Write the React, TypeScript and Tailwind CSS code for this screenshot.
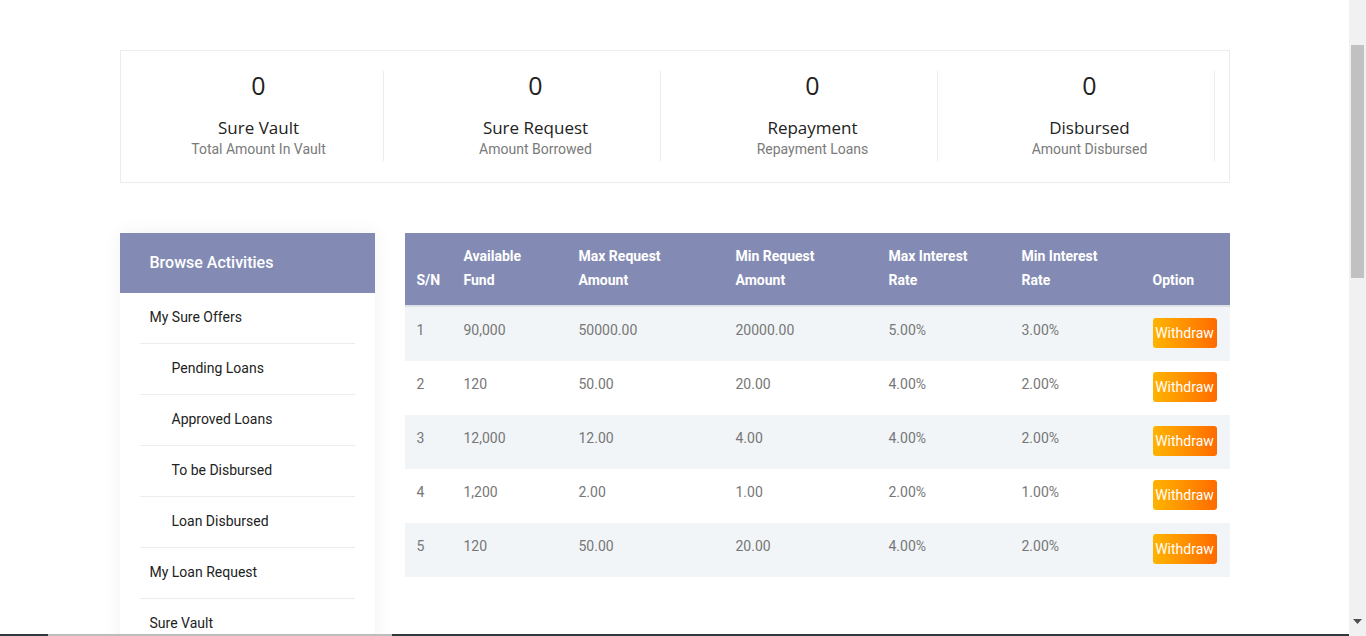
const stats = [
  { value: "0", title: "Sure Vault", sub: "Total Amount In Vault" },
  { value: "0", title: "Sure Request", sub: "Amount Borrowed" },
  { value: "0", title: "Repayment", sub: "Repayment Loans" },
  { value: "0", title: "Disbursed", sub: "Amount Disbursed" },
];

const menu = [
  { label: "My Sure Offers", sub: false },
  { label: "Pending Loans", sub: true },
  { label: "Approved Loans", sub: true },
  { label: "To be Disbursed", sub: true },
  { label: "Loan Disbursed", sub: true },
  { label: "My Loan Request", sub: false },
  { label: "Sure Vault", sub: false },
];

const rows = [
  ["1", "90,000", "50000.00", "20000.00", "5.00%", "3.00%"],
  ["2", "120", "50.00", "20.00", "4.00%", "2.00%"],
  ["3", "12,000", "12.00", "4.00", "4.00%", "2.00%"],
  ["4", "1,200", "2.00", "1.00", "2.00%", "1.00%"],
  ["5", "120", "50.00", "20.00", "4.00%", "2.00%"],
];

const heads = [
  { label: <>S/N</>, w: "w-[47px]" },
  { label: <>Available<br />Fund</>, w: "w-[115px]" },
  { label: <>Max Request<br />Amount</>, w: "w-[157px]" },
  { label: <>Min Request<br />Amount</>, w: "w-[153px]" },
  { label: <>Max Interest<br />Rate</>, w: "w-[133px]" },
  { label: <>Min Interest<br />Rate</>, w: "w-[131px]" },
  { label: <>Option</>, w: "w-[89px]" },
];

export default function App() {
  return (
    <div className="h-[636px] flex bg-white font-['Roboto',sans-serif] overflow-hidden">
      <div className="flex-1 flex flex-col min-w-0">
        <main className="flex-1 overflow-hidden">
          <div className="w-[1110px] mx-auto pt-[50px]">
            {/* Stats */}
            <section className="border border-[#ececec] pl-[14px] pt-5 pb-[21px] flex gap-[28px]">
              {stats.map((s) => (
                <div key={s.title} className="w-[249px] h-[90px] border-r border-[#ececec] flex flex-col items-center">
                  <p className="font-['Open_Sans',sans-serif] text-[25px] leading-[28px] text-[#222]">{s.value}</p>
                  <p className="font-['Open_Sans',sans-serif] text-[17px] leading-[22px] text-[#222] mt-[18px]">{s.title}</p>
                  <p className="text-[14px] leading-[20px] text-[#7a7a7a]">{s.sub}</p>
                </div>
              ))}
            </section>

            <div className="flex gap-[30px] mt-[50px] items-start">
              {/* Sidebar */}
              <aside className="w-[255px] shrink-0 bg-white shadow-[0_0_18px_rgba(0,0,0,0.06)]">
                <div className="h-[60px] bg-[#838bb4] flex items-center pl-[30px]">
                  <h2 className="text-white text-[16px] font-medium">Browse Activities</h2>
                </div>
                <ul className="px-5">
                  {menu.map((m) => (
                    <li
                      key={m.label}
                      className={`h-[51px] pb-[2px] flex items-center border-b border-[#ececec] text-[14px] text-[#222] ${m.sub ? "pl-[32px]" : "pl-[10px]"}`}
                    >
                      {m.label}
                    </li>
                  ))}
                </ul>
              </aside>

              {/* Table */}
              <table className="w-[825px] border-collapse table-fixed">
                <thead>
                  <tr className="bg-[#838bb4]">
                    {heads.map((h, i) => (
                      <th
                        key={i}
                        className={`${h.w} text-left align-bottom px-3 pt-[11px] pb-[13px] text-[14px] leading-[24px] font-bold text-white border-b-2 border-[#dee2e6]`}
                      >
                        {h.label}
                      </th>
                    ))}
                  </tr>
                </thead>
                <tbody>
                  {rows.map((r, i) => (
                    <tr key={i} className={i % 2 === 0 ? "bg-[#f1f5f8]" : "bg-white"}>
                      {r.map((c, j) => (
                        <td key={j} className="px-3 pt-[13px] pb-3 align-top text-[14px] leading-[21px] text-[#777]">
                          {c}
                        </td>
                      ))}
                      <td className="px-3 pt-[11px] pb-[13px] align-top">
                        <button className="h-[30px] w-[64px] rounded-[3px] bg-gradient-to-r from-[#ffb300] to-[#ff6a00] text-white text-[14px] leading-[30px] text-center">
                          Withdraw
                        </button>
                      </td>
                    </tr>
                  ))}
                </tbody>
              </table>
            </div>
          </div>
        </main>
        {/* bottom strip */}
        <div className="h-[2px] flex shrink-0">
          <div className="w-[48px] bg-[#2f3a3f]" />
          <div className="w-[344px] bg-[#bdbdbd]" />
          <div className="flex-1 bg-[#2f3a3f]" />
        </div>
      </div>

      {/* scrollbar */}
      <div className="w-[17px] shrink-0 bg-[#f1f1f1] flex flex-col items-center">
        <div className="h-[45px]" />
        <div className="w-[13px] h-[233px] bg-[#c1c1c1]" />
        <div className="flex-1" />
        <svg width="9" height="6" viewBox="0 0 9 6" className="mb-[11px]">
          <path d="M0 0h9L4.5 5z" fill="#505050" />
        </svg>
      </div>
    </div>
  );
}
